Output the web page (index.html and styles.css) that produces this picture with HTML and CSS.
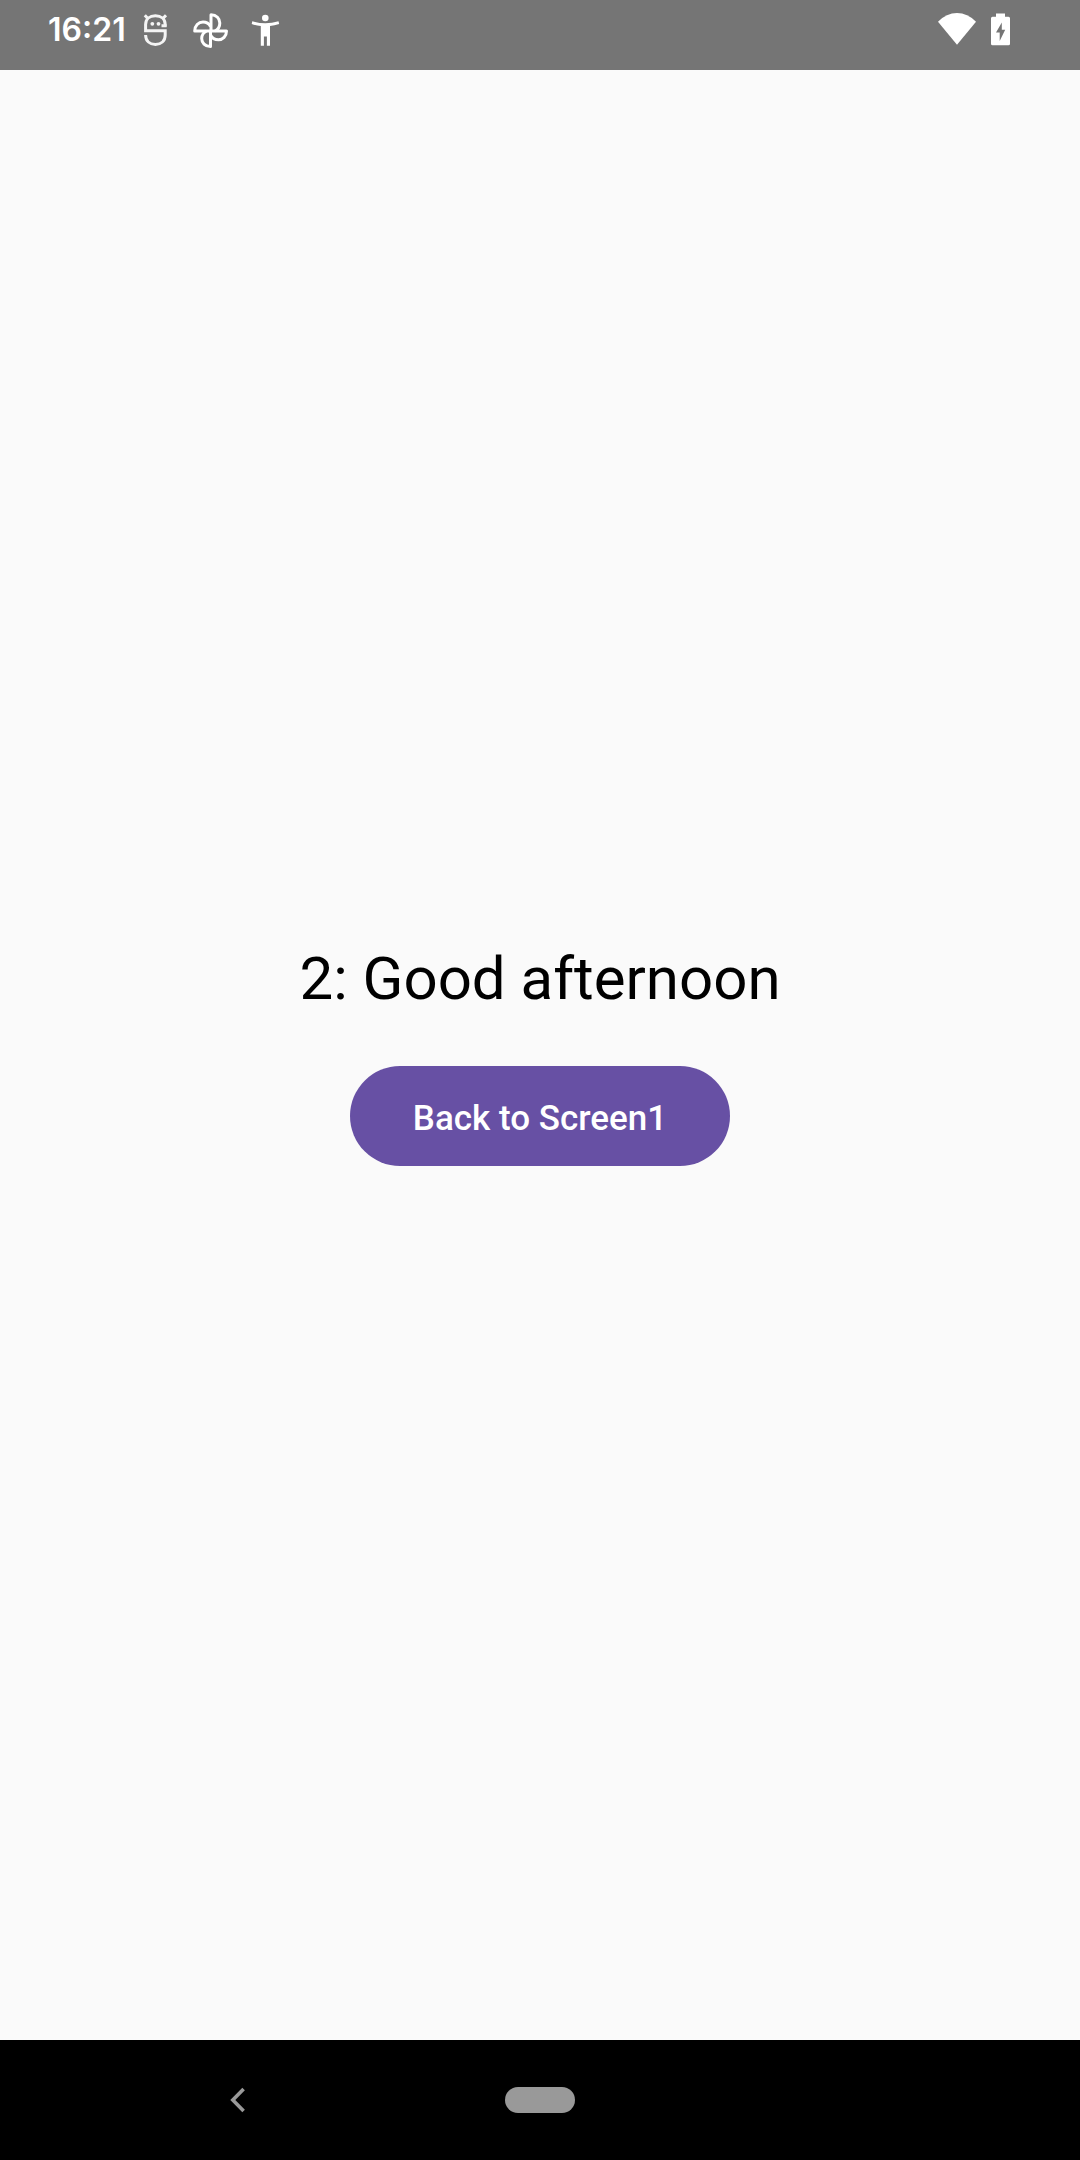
FILE: index.html
```html
<!DOCTYPE html>
<html lang="en">
<head>
<meta charset="utf-8">
<meta name="viewport" content="width=device-width, initial-scale=1">
<title>Screen 2</title>
<link rel="stylesheet" href="styles.css">
</head>
<body>
<header class="status-bar">
  <div class="status-group">
    <time class="clock" datetime="16:21">16:21</time>
    <div class="notifications">
      <svg class="icon" viewBox="0 0 40 40" fill="none" stroke="#f4f4f4" stroke-width="3" aria-hidden="true">
        <path d="M29.200 16.800V14.500C29.200 9 25 5.800 19.400 5.800S9.600 9 9.600 14.500V20.800H29.200V25C29.200 31 25 34.400 19.400 34.400S9.600 31 9.600 25"/>
        <path d="M25.500 15.700H30.500M8.800 5.300L12 8.600M30 5.300L26.800 8.600"/>
        <circle cx="16.300" cy="13.800" r="1.900" fill="#f4f4f4" stroke="none"/>
        <circle cx="22.500" cy="13.800" r="1.900" fill="#f4f4f4" stroke="none"/>
      </svg>
      <svg class="icon" viewBox="0 0 40 40" fill="none" stroke="#fff" stroke-width="3" stroke-linejoin="round" aria-hidden="true">
        <path d="M20 21V4.800C25.500 4.800 28.800 8.600 28.800 13C28.800 16.500 27 19.500 24 21"/>
        <path d="M19.500 21H35.500C35.500 26.500 31.700 29.700 27.500 29.700C24 29.700 21 28 19.500 25"/>
        <path d="M19.500 21V36.500C14 36.500 10.700 32.700 10.700 28.500C10.700 25 12.500 22.500 15.500 21"/>
        <path d="M19.500 21H3.700C3.700 15.500 7.500 12 12 12C15.500 12 18 13.500 19.500 16.500"/>
      </svg>
      <svg class="icon" viewBox="0 0 40 40" fill="#fff" aria-hidden="true">
        <circle cx="19.300" cy="8" r="3.300"/>
        <path d="M6.300 11.200Q19.300 15.400 32.500 11.200L33.200 14Q28.500 15.400 24 15.900V35.700H20.900V26.500H17.900V35.700H14.800V15.900Q10 15.400 5.700 14Z"/>
      </svg>
    </div>
  </div>
  <div class="system-icons">
    <svg class="icon icon-wide" viewBox="0 0 44 40" fill="#fff" aria-hidden="true">
      <path d="M3 11.700Q11.500 3 22 3T41 11.700L22 34.700Z"/>
    </svg>
    <svg class="icon icon-wide" viewBox="0 0 44 40" aria-hidden="true">
      <path fill="#fff" fill-rule="evenodd" d="M17 3.500H26V6.700H29.500Q31 6.700 31 8.200V33.700Q31 35.200 29.500 35.200H13.500Q12 35.200 12 33.700V8.200Q12 6.700 13.500 6.700H17ZM22.800 12.500L17 22.500H20.700V31L26.200 19.800H22.800Z"/>
    </svg>
  </div>
</header>
<main class="screen">
  <h1 class="greeting">2: Good afternoon</h1>
  <button class="back-button" type="button">Back to Screen1</button>
</main>
<nav class="nav-bar" aria-label="System navigation">
  <button class="nav-button" type="button" aria-label="Back">
    <svg class="icon" viewBox="0 0 40 40" fill="none" stroke="#999" stroke-width="3.600" aria-hidden="true">
      <path d="M23.600 9L12.800 20L23.600 31"/>
    </svg>
  </button>
  <button class="nav-button" type="button" aria-label="Home"><span class="home-pill"></span></button>
</nav>
</body>
</html>
```
FILE: styles.css
```css
* {
  box-sizing: border-box;
}

body {
  margin: 0;
  min-height: 100vh;
  display: flex;
  flex-direction: column;
  background: #fafafa;
  color: #000;
  font-family: Roboto, sans-serif;
}

.status-bar {
  display: flex;
  justify-content: space-between;
  align-items: center;
  height: 70px;
  padding: 0 57px 10px 48px;
  background: #757575;
  color: #fff;
}

.status-group,
.notifications,
.system-icons {
  display: flex;
  align-items: center;
}

.status-group {
  gap: 10px;
}

.notifications {
  gap: 15px;
}

.clock {
  font: 600 32px/40px Inter, sans-serif;
}

.icon {
  display: block;
  width: 40px;
  height: 40px;
}

.icon-wide {
  width: 44px;
}

.screen {
  flex: 1;
  display: flex;
  flex-direction: column;
  align-items: center;
  justify-content: center;
  gap: 42px;
  padding-bottom: 10px;
}

.greeting {
  margin: 0;
  font-size: 60px;
  font-weight: 400;
  line-height: 90px;
}

.back-button {
  min-height: 100px;
  padding: 6px 63px 0;
  border: 0;
  border-radius: 50px;
  background: #6750a4;
  color: #fff;
  font: 500 35px/50px Roboto, sans-serif;
}

.nav-bar {
  display: grid;
  grid-template-columns: repeat(3, 1fr);
  height: 120px;
  padding: 0 90px;
  background: #000;
}

.nav-button {
  display: flex;
  align-items: center;
  justify-content: center;
  padding: 0;
  border: 0;
  background: none;
}

.home-pill {
  width: 70px;
  height: 26px;
  border-radius: 13px;
  background: #999;
}
```
